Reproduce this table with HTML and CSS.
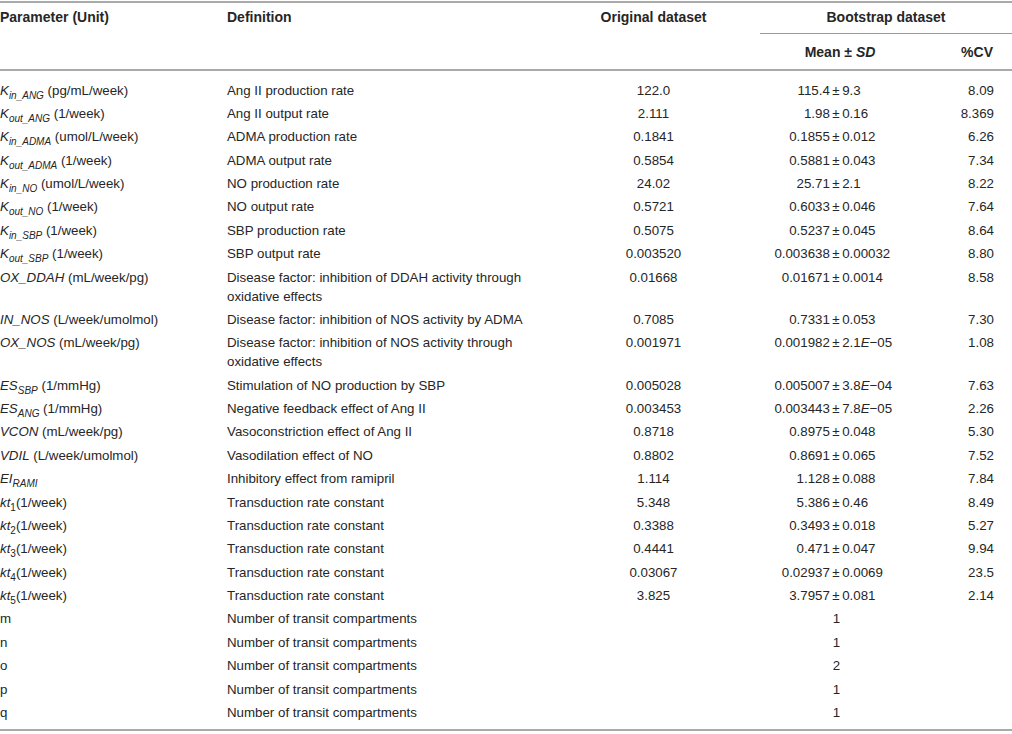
FILE: index.html
```html
<!DOCTYPE html>
<html lang="en">
<head>
    <meta charset="UTF-8">
    <title>Model parameters</title>
    <link rel="stylesheet" href="styles.css">
</head>
<body>
    <table class="params">
        <colgroup>
            <col class="c-param">
            <col class="c-def">
            <col class="c-orig">
            <col class="c-mean">
            <col class="c-cv">
        </colgroup>
        <thead>
            <tr>
                <th rowspan="2">Parameter (Unit)</th>
                <th rowspan="2">Definition</th>
                <th rowspan="2" class="center">Original dataset</th>
                <th colspan="2" class="center boot">Bootstrap dataset</th>
            </tr>
            <tr class="sub-head">
                <th class="center mean-head">Mean &plusmn; <i>SD</i></th>
                <th class="cv">%CV</th>
            </tr>
        </thead>
        <tbody>
            <tr>
                <td><i>K</i><sub>in_ANG</sub> (pg/mL/week)</td>
                <td class="def">Ang II production rate</td>
                <td class="orig">122.0</td>
                <td><div class="pm"><span>115.4</span><span>&plusmn;</span><span>9.3</span></div></td>
                <td class="cv">8.09</td>
            </tr>
            <tr>
                <td><i>K</i><sub>out_ANG</sub> (1/week)</td>
                <td class="def">Ang II output rate</td>
                <td class="orig">2.111</td>
                <td><div class="pm"><span>1.98</span><span>&plusmn;</span><span>0.16</span></div></td>
                <td class="cv">8.369</td>
            </tr>
            <tr>
                <td><i>K</i><sub>in_ADMA</sub> (umol/L/week)</td>
                <td class="def">ADMA production rate</td>
                <td class="orig">0.1841</td>
                <td><div class="pm"><span>0.1855</span><span>&plusmn;</span><span>0.012</span></div></td>
                <td class="cv">6.26</td>
            </tr>
            <tr>
                <td><i>K</i><sub>out_ADMA</sub> (1/week)</td>
                <td class="def">ADMA output rate</td>
                <td class="orig">0.5854</td>
                <td><div class="pm"><span>0.5881</span><span>&plusmn;</span><span>0.043</span></div></td>
                <td class="cv">7.34</td>
            </tr>
            <tr>
                <td><i>K</i><sub>in_NO</sub> (umol/L/week)</td>
                <td class="def">NO production rate</td>
                <td class="orig">24.02</td>
                <td><div class="pm"><span>25.71</span><span>&plusmn;</span><span>2.1</span></div></td>
                <td class="cv">8.22</td>
            </tr>
            <tr>
                <td><i>K</i><sub>out_NO</sub> (1/week)</td>
                <td class="def">NO output rate</td>
                <td class="orig">0.5721</td>
                <td><div class="pm"><span>0.6033</span><span>&plusmn;</span><span>0.046</span></div></td>
                <td class="cv">7.64</td>
            </tr>
            <tr>
                <td><i>K</i><sub>in_SBP</sub> (1/week)</td>
                <td class="def">SBP production rate</td>
                <td class="orig">0.5075</td>
                <td><div class="pm"><span>0.5237</span><span>&plusmn;</span><span>0.045</span></div></td>
                <td class="cv">8.64</td>
            </tr>
            <tr>
                <td><i>K</i><sub>out_SBP</sub> (1/week)</td>
                <td class="def">SBP output rate</td>
                <td class="orig">0.003520</td>
                <td><div class="pm"><span>0.003638</span><span>&plusmn;</span><span>0.00032</span></div></td>
                <td class="cv">8.80</td>
            </tr>
            <tr>
                <td><i>OX_DDAH</i> (mL/week/pg)</td>
                <td class="def">Disease factor: inhibition of DDAH activity through oxidative effects</td>
                <td class="orig">0.01668</td>
                <td><div class="pm"><span>0.01671</span><span>&plusmn;</span><span>0.0014</span></div></td>
                <td class="cv">8.58</td>
            </tr>
            <tr>
                <td><i>IN_NOS</i> (L/week/umolmol)</td>
                <td class="def">Disease factor: inhibition of NOS activity by ADMA</td>
                <td class="orig">0.7085</td>
                <td><div class="pm"><span>0.7331</span><span>&plusmn;</span><span>0.053</span></div></td>
                <td class="cv">7.30</td>
            </tr>
            <tr>
                <td><i>OX_NOS</i> (mL/week/pg)</td>
                <td class="def">Disease factor: inhibition of NOS activity through oxidative effects</td>
                <td class="orig">0.001971</td>
                <td><div class="pm"><span>0.001982</span><span>&plusmn;</span><span>2.1<i>E</i>&minus;05</span></div></td>
                <td class="cv">1.08</td>
            </tr>
            <tr>
                <td><i>ES</i><sub>SBP</sub> (1/mmHg)</td>
                <td class="def">Stimulation of NO production by SBP</td>
                <td class="orig">0.005028</td>
                <td><div class="pm"><span>0.005007</span><span>&plusmn;</span><span>3.8<i>E</i>&minus;04</span></div></td>
                <td class="cv">7.63</td>
            </tr>
            <tr>
                <td><i>ES</i><sub>ANG</sub> (1/mmHg)</td>
                <td class="def">Negative feedback effect of Ang II</td>
                <td class="orig">0.003453</td>
                <td><div class="pm"><span>0.003443</span><span>&plusmn;</span><span>7.8<i>E</i>&minus;05</span></div></td>
                <td class="cv">2.26</td>
            </tr>
            <tr>
                <td><i>VCON</i> (mL/week/pg)</td>
                <td class="def">Vasoconstriction effect of Ang II</td>
                <td class="orig">0.8718</td>
                <td><div class="pm"><span>0.8975</span><span>&plusmn;</span><span>0.048</span></div></td>
                <td class="cv">5.30</td>
            </tr>
            <tr>
                <td><i>VDIL</i> (L/week/umolmol)</td>
                <td class="def">Vasodilation effect of NO</td>
                <td class="orig">0.8802</td>
                <td><div class="pm"><span>0.8691</span><span>&plusmn;</span><span>0.065</span></div></td>
                <td class="cv">7.52</td>
            </tr>
            <tr>
                <td><i>EI</i><sub>RAMI</sub></td>
                <td class="def">Inhibitory effect from ramipril</td>
                <td class="orig">1.114</td>
                <td><div class="pm"><span>1.128</span><span>&plusmn;</span><span>0.088</span></div></td>
                <td class="cv">7.84</td>
            </tr>
            <tr>
                <td><i>kt</i><sub class="num">1</sub>(1/week)</td>
                <td class="def">Transduction rate constant</td>
                <td class="orig">5.348</td>
                <td><div class="pm"><span>5.386</span><span>&plusmn;</span><span>0.46</span></div></td>
                <td class="cv">8.49</td>
            </tr>
            <tr>
                <td><i>kt</i><sub class="num">2</sub>(1/week)</td>
                <td class="def">Transduction rate constant</td>
                <td class="orig">0.3388</td>
                <td><div class="pm"><span>0.3493</span><span>&plusmn;</span><span>0.018</span></div></td>
                <td class="cv">5.27</td>
            </tr>
            <tr>
                <td><i>kt</i><sub class="num">3</sub>(1/week)</td>
                <td class="def">Transduction rate constant</td>
                <td class="orig">0.4441</td>
                <td><div class="pm"><span>0.471</span><span>&plusmn;</span><span>0.047</span></div></td>
                <td class="cv">9.94</td>
            </tr>
            <tr>
                <td><i>kt</i><sub class="num">4</sub>(1/week)</td>
                <td class="def">Transduction rate constant</td>
                <td class="orig">0.03067</td>
                <td><div class="pm"><span>0.02937</span><span>&plusmn;</span><span>0.0069</span></div></td>
                <td class="cv">23.5</td>
            </tr>
            <tr>
                <td><i>kt</i><sub class="num">5</sub>(1/week)</td>
                <td class="def">Transduction rate constant</td>
                <td class="orig">3.825</td>
                <td><div class="pm"><span>3.7957</span><span>&plusmn;</span><span>0.081</span></div></td>
                <td class="cv">2.14</td>
            </tr>
            <tr>
                <td>m</td>
                <td class="def">Number of transit compartments</td>
                <td class="orig"></td>
                <td class="single">1</td>
                <td class="cv"></td>
            </tr>
            <tr>
                <td>n</td>
                <td class="def">Number of transit compartments</td>
                <td class="orig"></td>
                <td class="single">1</td>
                <td class="cv"></td>
            </tr>
            <tr>
                <td>o</td>
                <td class="def">Number of transit compartments</td>
                <td class="orig"></td>
                <td class="single">2</td>
                <td class="cv"></td>
            </tr>
            <tr>
                <td>p</td>
                <td class="def">Number of transit compartments</td>
                <td class="orig"></td>
                <td class="single">1</td>
                <td class="cv"></td>
            </tr>
            <tr>
                <td>q</td>
                <td class="def">Number of transit compartments</td>
                <td class="orig"></td>
                <td class="single">1</td>
                <td class="cv"></td>
            </tr>
        </tbody>
    </table>
</body>
</html>
```

FILE: styles.css
```css
body {
    margin: 0;
    padding-top: 1px;
    font-family: "Liberation Sans", Arial, sans-serif;
    font-size: 13.3px;
    color: #262626;
    background: #fff;
}

.params {
    width: 1012px;
    table-layout: fixed;
    border-collapse: collapse;
    border-top: 2px solid #aaa;
    border-bottom: 2px solid #aaa;
}

.c-param { width: 227px; }
.c-def   { width: 320px; }
.c-orig  { width: 213px; }
.c-mean  { width: 160px; }
.c-cv    { width: 92px; }

/* header */
.params thead {
    border-bottom: 2px solid #aaa;
}

.params th {
    font-size: 14px;
    font-weight: bold;
    text-align: left;
    vertical-align: top;
    line-height: 19px;
    padding: 5px 0 6px;
}

.params th.center {
    text-align: center;
}

.params th.boot {
    border-bottom: 1px solid #999;
}

.params .sub-head th {
    padding: 8.5px 0 7.5px;
}

.params .sub-head th.cv {
    text-align: right;
    padding-right: 19px;
}

/* body rows */
.params td {
    line-height: 19px;
    padding: 2.2px 0;
    vertical-align: top;
}

.params tbody tr:first-child td {
    padding-top: 9.5px;
}

.params tbody tr:last-child td {
    padding-bottom: 7.5px;
}

.params td.def {
    padding-right: 10px;
}

.params td.orig {
    text-align: center;
}

.params td.cv {
    text-align: right;
    padding-right: 18px;
}

.params td.single {
    text-align: center;
    padding-right: 7px;
}

/* mean +- sd, lined up on the sign */
.pm {
    display: grid;
    grid-template-columns: 1fr auto 1fr;
    padding-right: 8px;
}

.pm span:first-child {
    text-align: right;
}

.pm span:nth-child(2) {
    margin: 0 2.5px;
}

sub {
    font-size: 10px;
    font-style: italic;
    line-height: 0;
    vertical-align: -4px;
}

sub.num {
    font-style: normal;
}
```
